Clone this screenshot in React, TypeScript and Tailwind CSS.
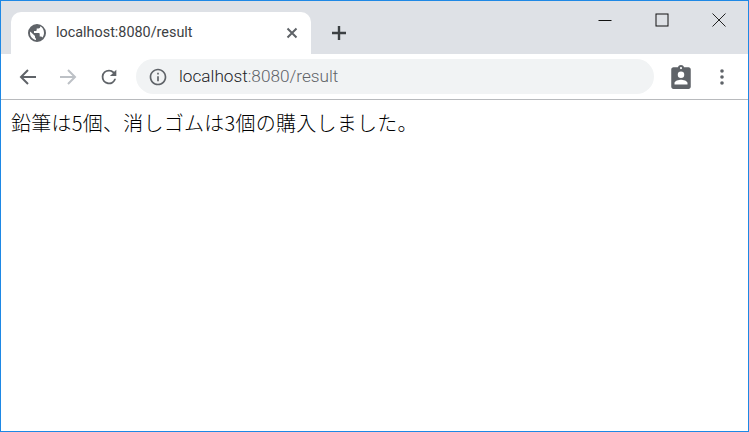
export default function App() {
  return (
    <div className="w-[749px] h-[432px] bg-white border border-[#1e88e5] flex flex-col overflow-hidden font-['Open_Sans','Noto_Sans_CJK_JP',sans-serif]">
      {/* Title strip */}
      <div className="h-[53px] bg-[#dee1e6] flex items-end shrink-0 relative">
        <div className="ml-[10px] w-[300px] h-[42px] bg-white rounded-t-[10px] flex items-center relative">
          <svg className="ml-[16px] w-[20px] h-[20px]" viewBox="0 0 20 20" fill="#5f6368">
            <path fillRule="evenodd" d="M10 1a9 9 0 1 0 0 18 9 9 0 0 0 0-18zM9 17c-3-.5-6-3.2-6-7 0-.6.1-1.1.2-1.6L8 13v1c0 .9.5 1.5 1 1.5V17zm6.3-2.4c-.3-.7-.9-1.2-1.7-1.2h-.9v-2.6c0-.5-.4-.9-.9-.9H7V8h1.8c.5 0 .9-.4.9-.9V5.400h1.800c1 0 1.700-.8 1.700-1.700V3.300C15.500 4.300 17 6.900 17 10c0 1.800-.7 3.400-1.700 4.600z" />
          </svg>
          <span className="ml-[9px] text-[14.4px] leading-none text-[#3c4043] font-['Roboto',sans-serif]">localhost:8080/result</span>
          <svg className="absolute right-[12px] top-[14px] w-[14px] h-[14px]" viewBox="0 0 14 14" stroke="#5f6368" strokeWidth="2" fill="none">
            <path d="M2.500 2.500l9 9M11.500 2.500l-9 9" />
          </svg>
        </div>
        <svg className="ml-[20px] mb-[13px] w-[16px] h-[16px]" viewBox="0 0 16 16" stroke="#3c4043" strokeWidth="2.400" fill="none">
          <path d="M8 1v14M1 8h14" />
        </svg>
        <div className="absolute top-[12px] right-[22px] flex items-center gap-[43px]">
          <svg className="w-[14px] h-[14px]" viewBox="0 0 14 14" stroke="#111" strokeWidth="1" fill="none"><path d="M0.500 7.500h13" /></svg>
          <svg className="w-[14px] h-[14px]" viewBox="0 0 14 14" stroke="#111" strokeWidth="1" fill="none"><rect x="1" y="1" width="12" height="12" /></svg>
          <svg className="w-[14px] h-[14px]" viewBox="0 0 14 14" stroke="#222" strokeWidth="1" fill="none"><path d="M0.500 0.500l13 13M13.500 0.500l-13 13" /></svg>
        </div>
      </div>
      {/* Toolbar */}
      <div className="h-[46px] bg-white border-b border-[#b8babd] flex items-center shrink-0">
        <svg className="ml-[17px] w-[20px] h-[20px]" viewBox="0 0 20 20" stroke="#5f6368" strokeWidth="2" fill="none"><path d="M18 10H3M10 3l-7 7 7 7" /></svg>
        <svg className="ml-[20px] w-[20px] h-[20px]" viewBox="0 0 20 20" stroke="#bdc1c6" strokeWidth="2" fill="none"><path d="M2 10h15M10 3l7 7-7 7" /></svg>
        <svg className="ml-[20px] w-[22px] h-[22px]" viewBox="0 0 24 24" fill="#5f6368"><path d="M17.650 6.350A7.960 7.960 0 0 0 12 4a8 8 0 1 0 7.730 10h-2.080A6 6 0 1 1 12 6c1.660 0 3.140.690 4.220 1.780L13 11h7V4l-2.350 2.350z" /></svg>
        <div className="ml-[16px] w-[518px] h-[35px] rounded-full bg-[#f1f3f4] flex items-center">
          <svg className="ml-[12px] w-[20px] h-[20px]" viewBox="0 0 24 24" fill="#5f6368"><path d="M11 7h2v2h-2zm0 4h2v6h-2zm1-9C6.480 2 2 6.480 2 12s4.480 10 10 10 10-4.480 10-10S17.520 2 12 2zm0 18c-4.410 0-8-3.590-8-8s3.590-8 8-8 8 3.590 8 8-3.590 8-8 8z" /></svg>
          <span className="ml-[11px] text-[17.2px] leading-none font-['Roboto',sans-serif] font-light text-[#202124]">localhost<span className="text-[#5f6368]">:8080/result</span></span>
        </div>
        <svg className="ml-[14px] w-[26px] h-[26px]" viewBox="0 0 24 24" fill="#5f6368"><path d="M19 3h-4.180C14.400 1.840 13.300 1 12 1s-2.400.840-2.820 2H5c-1.100 0-2 .900-2 2v16c0 1.100.900 2 2 2h14c1.100 0 2-.900 2-2V5c0-1.100-.900-2-2-2zm-7-.250a1 1 0 1 1 0 2 1 1 0 0 1 0-2zM12 7a3 3 0 1 1 0 6 3 3 0 0 1 0-6zm6 12H6v-1.400c0-2 4-3.100 6-3.100s6 1.100 6 3.100V19z" /></svg>
        <svg className="ml-[26px] w-[4px] h-[18px]" viewBox="0 0 4 18" fill="#5f6368"><circle cx="2" cy="3" r="1.800" /><circle cx="2" cy="9" r="1.800" /><circle cx="2" cy="15" r="1.800" /></svg>
      </div>
      {/* Page */}
      <div className="flex-1 bg-white pl-[10px] pt-[11px]">
        <p className="text-[20px] tracking-[0.25px] font-light leading-[24px] text-black font-['Noto_Sans_CJK_JP',sans-serif]">鉛筆は5個、消しゴムは3個の購入しました。</p>
      </div>
    </div>
  );
}
